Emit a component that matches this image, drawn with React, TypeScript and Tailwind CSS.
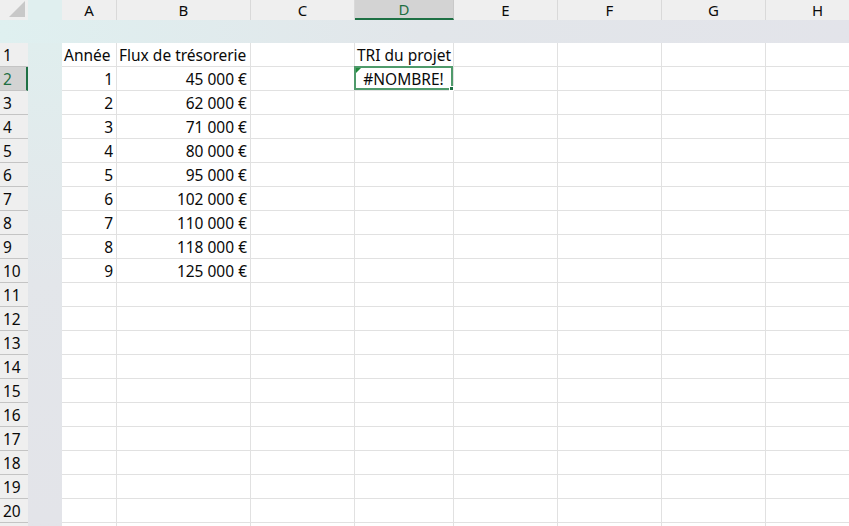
import React from "react";

const cols = [
  { key: "A", w: "w-[55px]" },
  { key: "B", w: "w-[134px]" },
  { key: "C", w: "w-[104px]" },
  { key: "D", w: "w-[99px]" },
  { key: "E", w: "w-[104px]" },
  { key: "F", w: "w-[104px]" },
  { key: "G", w: "w-[104px]" },
  { key: "H", w: "w-[104px]" },
];

const flux = ["45 000 €", "62 000 €", "71 000 €", "80 000 €", "95 000 €", "102 000 €", "110 000 €", "118 000 €", "125 000 €"];

const rows = Array.from({ length: 20 }, (_, i) => i + 1);

function Cell({ row, col }: { row: number; col: string }) {
  const width = cols.find((c) => c.key === col)!.w;
  let content: React.ReactNode = null;
  let align = "justify-start pl-[2px]";

  if (row === 1 && col === "A") content = "Année";
  if (row === 1 && col === "B") content = "Flux de trésorerie";
  if (row === 1 && col === "D") content = <span className="whitespace-nowrap">TRI du projet</span>;
  if (row >= 2 && row <= 10 && col === "A") {
    content = row - 1;
    align = "justify-end pr-[3px]";
  }
  if (row >= 2 && row <= 10 && col === "B") {
    content = flux[row - 2];
    align = "justify-end pr-[3px]";
  }

  if (row === 2 && col === "D") {
    return (
      <div className={`${width} h-full shrink-0 relative border-r border-b border-[#e1e1e1]`}>
        <div className="absolute -left-px -top-px right-0 bottom-0 border-2 border-[#4f9a6b] flex items-center justify-center pt-px">
          #NOMBRE!
          <div className="absolute left-0 top-0 w-0 h-0 border-t-[5px] border-r-[5px] border-t-[#1f8a3c] border-r-transparent" />
          <div className="absolute -right-[3px] -bottom-[3px] w-[5px] h-[5px] bg-[#1e7044] border border-white" />
        </div>
      </div>
    );
  }

  return (
    <div className={`${width} h-full shrink-0 flex items-center pt-px ${align} border-r border-b border-[#e1e1e1] whitespace-nowrap`}>
      {content}
    </div>
  );
}

export default function App() {
  return (
    <div
      className="w-[849px] h-[526px] overflow-hidden bg-white text-[15.5px] text-[#0a0a0a] leading-[20px]"
      style={{ fontFamily: '"Noto Sans", "Liberation Sans", sans-serif' }}
    >
      {/* column headers */}
      <div className="flex h-[20px]">
        <div className="w-[28px] shrink-0 bg-[#efefef] relative overflow-hidden">
          <div className="absolute right-[3px] bottom-[3px] w-0 h-0 border-b-[16px] border-l-[16px] border-b-[#c8c8c8] border-l-transparent" />
        </div>
        <div className="w-[34px] shrink-0 bg-[#e0efef]" />
        {cols.map((c) => {
          const active = c.key === "D";
          return (
            <div
              key={c.key}
              className={`${c.w} shrink-0 flex items-center justify-center border-r text-[15px] leading-[18px] ${
                active
                  ? "bg-[#d3d3d3] text-[#1e6e42] border-[#c9c9c9] border-b-2 border-b-[#1e7044]"
                  : "bg-[#efefef] border-[#d9d9d9]"
              }`}
            >
              {c.key}
            </div>
          );
        })}
      </div>

      {/* band */}
      <div className="h-[23px] bg-gradient-to-r from-[#dff0f0] via-[#e2e6ea] to-[#e3e4ea]" />

      {/* body */}
      <div className="flex h-[483px]">
        <div className="w-[28px] shrink-0 flex flex-col bg-[#efefef]">
          {rows.map((r) => (
            <div
              key={r}
              className={`h-[24px] shrink-0 flex items-center pl-[3px] pt-px border-b border-[#c4c4c4] ${
                r === 2 ? "bg-[#d3d3d3] text-[#1e6e42] border-r-2 border-r-[#1e7044]" : "bg-[#efefef]"
              }`}
            >
              {r}
            </div>
          ))}
        </div>
        <div className="w-[34px] shrink-0 bg-gradient-to-b from-[#e0eeee] via-[#e3e6ea] to-[#e3e4e9]" />
        <div className="flex flex-col">
          {rows.map((r) => (
            <div key={r} className="flex h-[24px] shrink-0">
              {cols.map((c) => (
                <Cell key={c.key} row={r} col={c.key} />
              ))}
            </div>
          ))}
          <div className="flex flex-1">
            {cols.map((c) => (
              <div key={c.key} className={`${c.w} shrink-0 h-[3px] border-r border-[#e1e1e1]`} />
            ))}
          </div>
        </div>
      </div>
    </div>
  );
}
